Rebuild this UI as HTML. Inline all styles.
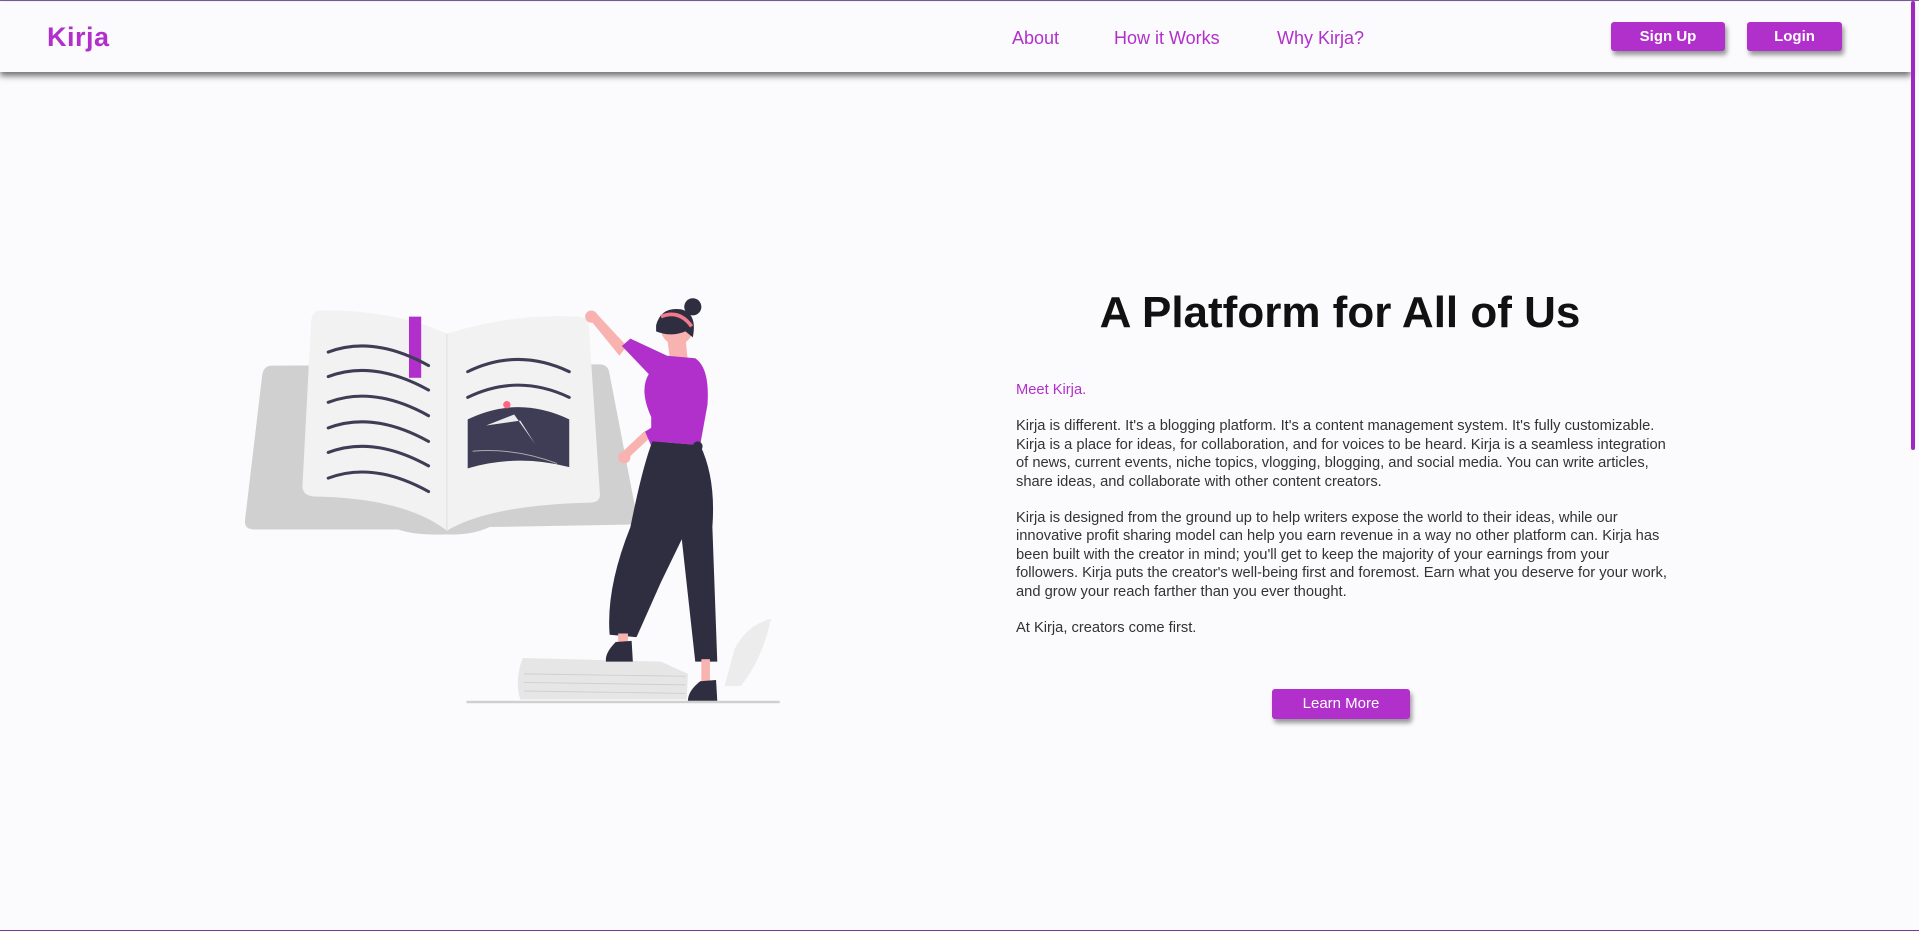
<!DOCTYPE html>
<html><head><meta charset="utf-8"><style>
html,body{margin:0;padding:0;}
body{width:1919px;height:931px;overflow:hidden;background:#fbfbfd;font-family:"Liberation Sans",sans-serif;position:relative;border-top:1px solid #7a5aa0;box-sizing:border-box;}
.hdr{position:absolute;left:0;top:1px;width:1911px;height:70px;background:#fbfbfd;box-shadow:0 4px 6px rgba(0,0,0,.55);}
.logo{position:absolute;left:47px;top:20px;font-size:27px;font-weight:bold;color:#b130cb;letter-spacing:.5px;}
.nav{position:absolute;top:26px;font-size:18px;color:#b130cb;}
.btn{position:absolute;background:#b130cb;color:#fff;font-size:15px;font-weight:bold;text-align:center;border-radius:3px;box-shadow:2px 4px 5px rgba(0,0,0,.4);}
.sb{position:absolute;right:4px;top:0;width:4px;height:449px;background:#a028c0;border-radius:2px;}
.bot{position:absolute;left:0;bottom:0;width:1919px;height:1px;background:#7a3a90;}
h1{position:absolute;left:1040px;width:600px;text-align:center;top:287px;margin:0;font-size:44px;font-weight:bold;color:#111;}
.txt{position:absolute;left:1016px;top:380px;width:700px;font-size:14.7px;line-height:18.4px;color:#333;white-space:nowrap;}
.txt p{margin:0 0 18px 0;}
</style></head><body>
<div class="hdr">
<div class="logo">Kirja</div>
<div class="nav" style="left:1012px">About</div>
<div class="nav" style="left:1114px">How it Works</div>
<div class="nav" style="left:1277px">Why Kirja?</div>
<div class="btn" style="left:1611px;top:20px;width:114px;height:29px;line-height:29px">Sign Up</div>
<div class="btn" style="left:1747px;top:20px;width:95px;height:29px;line-height:29px">Login</div>
</div>
<div class="sb"></div>
<svg style="position:absolute;left:0;top:0" width="1919" height="931" viewBox="0 0 1568 761">
<path d="M222 298 L490 297 Q497 297 498 305 L520 420 Q521 428 512 428 L400 430 Q385 437 365 436 Q340 437 325 432 L208 432 Q199 432 200 424 L214 306 Q215 298 222 298Z" fill="#d0d0d0"/>
<path d="M262 253 Q320 252 365 272 L365 433 Q330 406 256 405 Q246 404 247 395 L254 262 Q255 253 262 253Z" fill="#f2f2f2"/>
<path d="M365 272 Q420 255 472 258 Q480 258 481 266 L490 402 Q491 410 482 410 Q400 412 365 433Z" fill="#f2f2f2"/>
<line x1="365" y1="272" x2="365" y2="433" stroke="#e2e2e2" stroke-width="1"/>
<rect x="334" y="258" width="10" height="50" fill="#b130cb"/>
<g fill="none" stroke="#3f3d56" stroke-width="2.5" stroke-linecap="round">
<path d="M268 287 Q305 273 350 298"/><path d="M268 307 Q305 293 350 318"/><path d="M268 328 Q305 314 350 339"/><path d="M268 349 Q305 335 350 360"/><path d="M268 369 Q305 355 350 380"/><path d="M268 390 Q305 376 350 401"/>
<path d="M382 303 Q423 283 465 303"/><path d="M382 324 Q423 304 465 324"/>
</g>
<path d="M382 342 Q423 322 465 342 L465 381 Q423 370 382 382Z" fill="#3f3d56"/>
<path d="M397 347 L420 338 L437 362 L425 343Z" fill="#fff" opacity=".9"/>
<circle cx="414" cy="330" r="3" fill="#ff6584"/>
<path d="M386 368 Q420 365 455 378" stroke="#aaa" stroke-width=".8" fill="none"/>
<path d="M600 530 Q610 510 630 505 Q622 540 605 560 L592 560Z" fill="#ececec"/>
<rect x="381" y="572" width="256" height="2" fill="#cfcfcf"/>
<path d="M427 537 L540 540 L562 550 L561 571 L425 571 Q420 555 427 537Z" fill="#e6e6e6"/>
<g stroke="#cfcfcf" stroke-width=".8"><line x1="428" y1="550" x2="560" y2="552"/><line x1="428" y1="557" x2="560" y2="559"/><line x1="428" y1="564" x2="560" y2="566"/></g>
<path d="M480 258 L486 254 L512 282 L506 290Z" fill="#f8b3b0"/>
<circle cx="483" cy="258" r="5" fill="#f8b3b0"/>
<path d="M528 355 L512 370" stroke="#f8b3b0" stroke-width="7" stroke-linecap="round"/>
<circle cx="510" cy="373" r="5" fill="#f8b3b0"/>
<path d="M545 275 L560 275 L562 295 L548 298Z" fill="#f8b3b0"/>
<circle cx="553" cy="268" r="13" fill="#f8b3b0"/>
<path d="M536 265 Q540 250 556 252 Q570 255 566 275 L560 270 Q548 275 536 270Z" fill="#2f2e41"/>
<circle cx="566" cy="250" r="7" fill="#2f2e41"/>
<path d="M540 258 Q555 252 565 266" stroke="#f27a8c" stroke-width="3" fill="none"/>
<path d="M508 282 L515 276 L545 290 L568 292 Q580 300 578 330 L572 363 L532 360 L532 340 Q522 318 530 305Z" fill="#b130cb"/>
<path d="M527 352 L538 345 L545 360 L533 366Z" fill="#b130cb"/>
<path d="M533 360 L572 363 Q585 390 582 430 L586 540 L568 540 L557 440 L540 475 L520 520 L498 518 Q495 480 515 430 Q525 380 533 360Z" fill="#2f2e41"/>
<circle cx="570" cy="364" r="4" fill="#2f2e41"/>
<rect x="505" y="517" width="8" height="12" fill="#f8b3b0"/>
<path d="M503 524 L516 523 L517 540 L495 540 Q494 533 503 524Z" fill="#2f2e41"/>
<rect x="573" y="538" width="7" height="20" fill="#f8b3b0"/>
<path d="M572 556 L585 555 L586 572 L562 572 Q562 564 572 556Z" fill="#2f2e41"/>
</svg>
<h1>A Platform for All of Us</h1>
<div class="txt">
<p style="color:#b130cb">Meet Kirja.</p>
<p>Kirja is different. It's a blogging platform. It's a content management system. It's fully customizable.<br>Kirja is a place for ideas, for collaboration, and for voices to be heard. Kirja is a seamless integration<br>of news, current events, niche topics, vlogging, blogging, and social media. You can write articles,<br>share ideas, and collaborate with other content creators.</p>
<p>Kirja is designed from the ground up to help writers expose the world to their ideas, while our<br>innovative profit sharing model can help you earn revenue in a way no other platform can. Kirja has<br>been built with the creator in mind; you'll get to keep the majority of your earnings from your<br>followers. Kirja puts the creator's well-being first and foremost. Earn what you deserve for your work,<br>and grow your reach farther than you ever thought.</p>
<p>At Kirja, creators come first.</p>
</div>
<div class="btn" style="left:1272px;top:688px;width:138px;height:30px;line-height:30px;font-weight:normal">Learn More</div>
<div class="bot"></div>
</body></html>
